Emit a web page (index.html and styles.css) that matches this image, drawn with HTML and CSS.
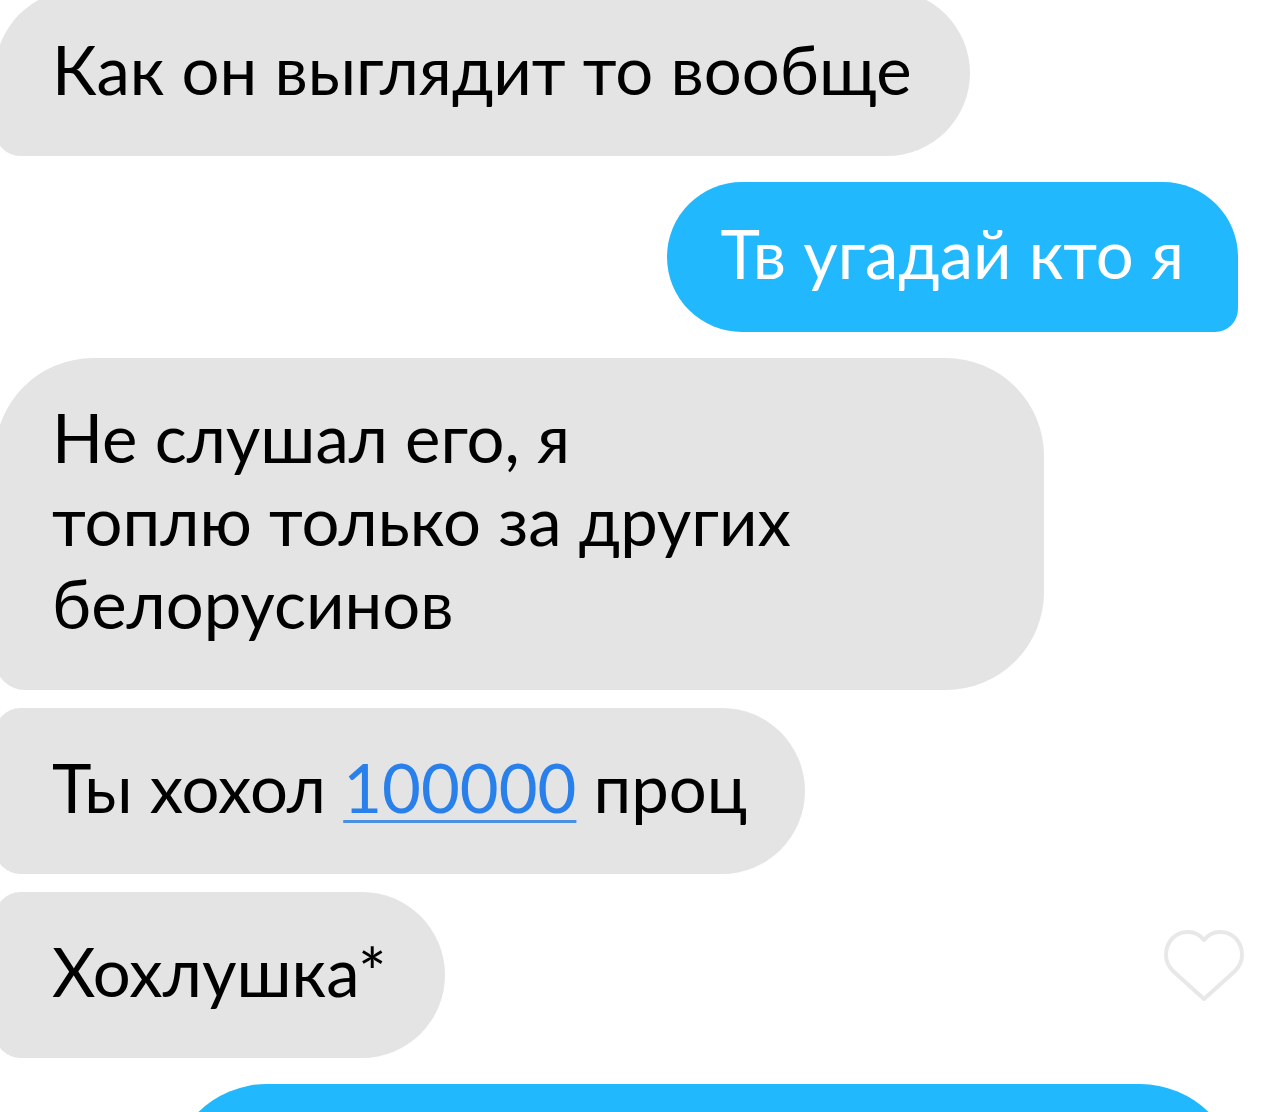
FILE: index.html
```
<!DOCTYPE html>
<html lang="ru">
<head>
<meta charset="utf-8">
<meta name="viewport" content="width=device-width, initial-scale=1">
<title>Чат</title>
<link rel="stylesheet" href="styles.css">
</head>
<body>
<main class="chat">
  <div class="row">
    <p class="bubble received">Как он выглядит то вообще</p>
  </div>
  <div class="row row-sent">
    <p class="bubble sent">Тв угадай кто я</p>
  </div>
  <div class="row">
    <p class="bubble received wide">Не слушал его, я<br>топлю только за других белорусинов</p>
  </div>
  <div class="row follow">
    <p class="bubble received joined">Ты хохол <a class="number" href="tel:100000">100000</a> проц</p>
  </div>
  <div class="row follow">
    <p class="bubble received joined">Хохлушка*</p>
    <button class="like" type="button" aria-label="Нравится">
      <svg class="heart" viewBox="0 0 80 72" aria-hidden="true">
        <path d="M40 69 L9 41 C4 36 2 31 2 25 C2 12 11 2 24 2 C31 2 36 5 40 10 C44 5 49 2 56 2 C69 2 78 12 78 25 C78 31 76 36 71 41 Z"/>
      </svg>
    </button>
  </div>
  <div class="row row-sent">
    <p class="bubble sent long"></p>
  </div>
</main>
</body>
</html>
```
FILE: styles.css
```
* {
  box-sizing: border-box;
}

body {
  margin: 0;
  background: #fff;
  color: #000;
  font-family: Lato, "Noto Sans", sans-serif;
  font-size: 67px;
  line-height: 83px;
}

.chat {
  display: flex;
  flex-direction: column;
  gap: 26px;
  height: 100vh;
  overflow: hidden;
  padding-right: 36px;
}

.row {
  display: flex;
  flex-shrink: 0;
  align-items: flex-start;
  justify-content: space-between;
  margin-left: -5px;
}

.row:first-child {
  margin-top: -10px;
}

.row-sent {
  justify-content: flex-end;
  padding-right: 6px;
}

/* consecutive messages from the same sender sit closer together */
.follow {
  margin-top: -8px;
}

.bubble {
  margin: 0;
}

.received {
  padding: 38px 58px 45px 57px;
  background: #e4e4e4;
  border-radius: 98px 98px 98px 30px;
}

.joined {
  border-top-left-radius: 30px;
}

.wide {
  width: 84%;
}

.sent {
  padding: 30px 54px 37px;
  background: #22b8fd;
  border-radius: 98px 98px 30px 98px;
  color: #fff;
}

.long {
  width: 86%;
  min-height: 233px;
}

.number {
  color: #2a80ea;
  text-decoration: underline;
  text-decoration-thickness: 3px;
  text-decoration-color: #4a90e0;
  text-underline-offset: 7px;
}

.like {
  margin-top: 38px;
  padding: 0;
  border: 0;
  background: none;
}

.heart {
  display: block;
  width: 80px;
  height: 72px;
  fill: none;
  stroke: #e8e8e8;
  stroke-width: 4;
  stroke-linejoin: round;
}
```
